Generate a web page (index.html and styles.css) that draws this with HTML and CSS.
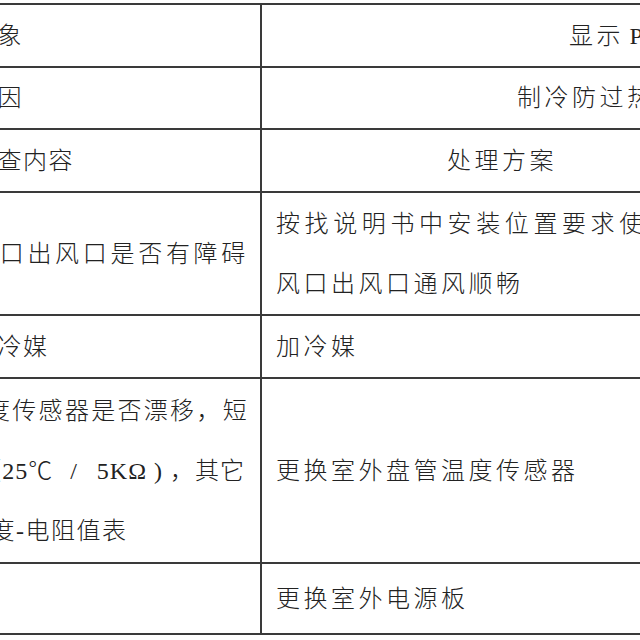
FILE: index.html
```html
<!DOCTYPE html>
<html lang="zh-CN">
<head>
<meta charset="utf-8">
<title>故障处理表</title>
<link rel="stylesheet" href="styles.css">
</head>
<body>
<div class="sheet">
  <div class="cell left"><div class="ln">现象</div></div>
  <div class="cell right pad-h1"><div class="ln snug">显示 P</div></div>

  <div class="cell left"><div class="ln">原因</div></div>
  <div class="cell right pad-h2"><div class="ln">制冷防过热</div></div>

  <div class="cell left"><div class="ln">检查内容</div></div>
  <div class="cell right center"><div class="ln">处理方案</div></div>

  <div class="cell left"><div class="ln end wide">口出风口是否有障碍</div></div>
  <div class="cell right"><div class="ln wider">按找说明书中安装位置要求使</div><div class="ln">风口出风口通风顺畅</div></div>

  <div class="cell left"><div class="ln">加冷媒</div></div>
  <div class="cell right"><div class="ln">加冷媒</div></div>

  <div class="cell left">
    <div class="ln end tight">度传感器是否漂移，短</div>
    <div class="ln end unit">（25℃<span class="gap g1"></span>/<span class="gap g2"></span>5KΩ )<span class="gap g3"></span>，其它</div>
    <div class="ln shift">温度-电阻值表</div>
  </div>
  <div class="cell right"><div class="ln">更换室外盘管温度传感器</div></div>

  <div class="cell left"></div>
  <div class="cell right"><div class="ln">更换室外电源板</div></div>
</div>
</body>
</html>
```
FILE: styles.css
```css
html, body {
  margin: 0;
  padding: 0;
  width: 640px;
  height: 640px;
  overflow: hidden;
  background: #ffffff;
}

.sheet {
  display: grid;
  grid-template-columns: 318px 480px;
  grid-template-rows: 61px 60px 61px 121px 61px 183px 69px;
  gap: 2px;
  padding: 2px;
  width: max-content;
  margin: 3px 0 0 -60px;
  background: #3a3a3a;
  font-family: "Liberation Serif", "Noto Sans CJK SC", serif;
  font-size: 24px;
  font-weight: 300;
  color: #222222;
}

.cell {
  background: #ffffff;
  display: flex;
  flex-direction: column;
  justify-content: center;
  white-space: nowrap;
  overflow: hidden;
  line-height: 60px;
}

.left {
  padding: 0 11px 0 30px;
  letter-spacing: 1.5px;
}

.right {
  padding: 0 14px;
  letter-spacing: 3.5px;
}

.pad-h1 { padding-left: 307px; }
.pad-h2 { padding-left: 255px; }

.center { text-align: center; }

.ln.end { text-align: right; }
.ln.wide { letter-spacing: 3.7px; }
.ln.wider { letter-spacing: 4.6px; }
.ln.tight { letter-spacing: 2.3px; }
.ln.shift { margin-left: -7px; }
.ln.snug { word-spacing: -4px; }
.ln.unit {
  letter-spacing: 1px;
  margin-right: 4px;
}

.gap { display: inline-block; }
.g1 { width: 17px; }
.g2 { width: 19px; }
.g3 { width: 7px; }
```
